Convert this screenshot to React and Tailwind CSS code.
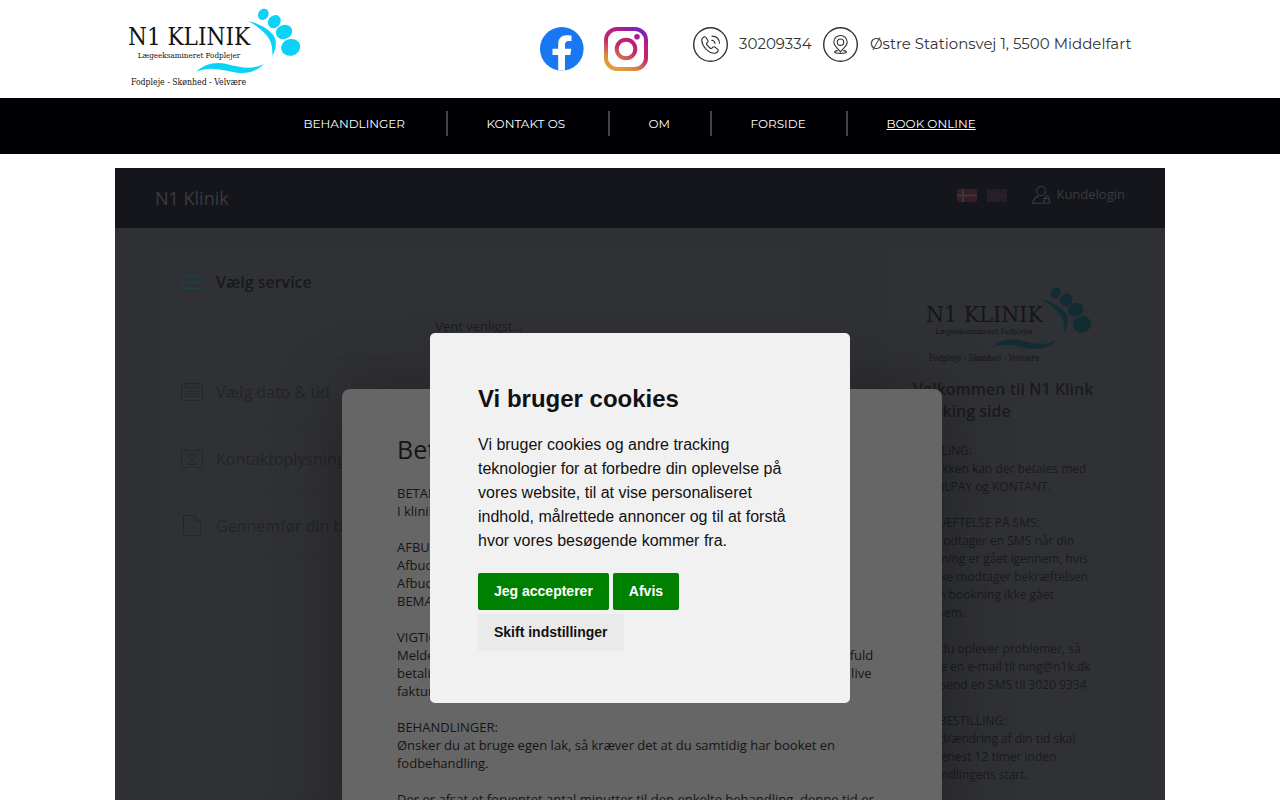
import React from "react";

function Logo({ className, ink, aqua }) {
  return (
    <svg viewBox="15 0 585 294" className={className} role="img" aria-label="N1 Klinik">
      <g fill={ink} fontFamily="'DejaVu Serif Condensed', 'DejaVu Serif', serif">
        <text x="54" y="136" fontSize="72">N1 KLINIK</text>
        <text x="83" y="173" fontSize="24">Lægeeksamineret Fodplejer</text>
        <text x="63" y="255" fontSize="26">Fodpleje - Skønhed - Velvære</text>
      </g>
      <g fill={aqua}>
        <ellipse cx="460" cy="43" rx="15" ry="18" transform="rotate(35 460 43)" />
        <ellipse cx="493" cy="65" rx="18" ry="21" transform="rotate(40 493 65)" />
        <ellipse cx="522" cy="96" rx="25" ry="21" transform="rotate(-20 522 96)" />
        <ellipse cx="542" cy="142" rx="29" ry="25" transform="rotate(-15 542 142)" />
        <path d="M414 62C452 72 482 90 494 112C502 130 496 152 487 167C488 140 484 122 468 104C452 86 434 74 414 62Z" />
        <path d="M258 215C284 192 314 184 350 192C392 202 424 212 462 191C440 215 412 222 380 218C340 212 306 196 258 215Z" />
      </g>
    </svg>
  );
}

function Facebook() {
  return (
    <svg viewBox="0 0 44 44" className="size-11">
      <circle cx="21.8" cy="21.8" r="21.8" fill="#1877f2" />
      <path fill="#fff" d="M18.2 43.5V28H12.5V21.7H18.2V17C18.2 11.3 21.5 8.2 26.6 8.2C28.7 8.2 31.5 8.6 31.5 8.6V14H28.8C26 14 25 15.7 25 17.6V21.7H31.3L30.3 28H25V43.5Z" />
    </svg>
  );
}

function Instagram() {
  return (
    <svg viewBox="0 0 44 44" className="size-11">
      <defs>
        <linearGradient id="insta" x1="0.25" y1="1" x2="0.75" y2="0">
          <stop offset="0" stopColor="#e3a33c" />
          <stop offset="0.2" stopColor="#dc8a44" />
          <stop offset="0.5" stopColor="#c2286b" />
          <stop offset="0.75" stopColor="#bb1d80" />
          <stop offset="1" stopColor="#7024c4" />
        </linearGradient>
      </defs>
      <path
        fill="url(#insta)"
        fillRule="evenodd"
        d="M13 0H31A13 13 0 0 1 44 13V31A13 13 0 0 1 31 44H13A13 13 0 0 1 0 31V13A13 13 0 0 1 13 0ZM13 4A9 9 0 0 0 4 13V31A9 9 0 0 0 13 40H31A9 9 0 0 0 40 31V13A9 9 0 0 0 31 4ZM22 10.7A11.3 11.3 0 1 1 22 33.3A11.3 11.3 0 1 1 22 10.7ZM22 14.7A7.3 7.3 0 1 0 22 29.3A7.3 7.3 0 1 0 22 14.7ZM33 7A2.8 2.8 0 1 1 33 12.6A2.8 2.8 0 1 1 33 7Z"
      />
    </svg>
  );
}

function PhoneBadge() {
  return (
    <svg viewBox="0 0 35 35" className="size-[35px] shrink-0" fill="none" stroke="#333" strokeLinecap="round" strokeLinejoin="round">
      <circle cx="17.5" cy="17.5" r="16.8" strokeWidth="1.4" />
      <path strokeWidth="1.1" d="M11.3 9.8C10 10.3 8.7 11.6 8.8 13.6C9.2 19.6 15.3 25.9 21.5 26.2C23.3 26.3 24.8 25 25.2 23.7C25.4 23 25.1 22.5 24.6 22.1L21.7 20C21.1 19.6 20.4 19.7 19.9 20.2L18.9 21.2C18.4 21.6 17.8 21.6 17.3 21.2C15.9 20.2 14.6 18.8 13.7 17.4C13.4 16.9 13.4 16.4 13.8 16L14.7 15.1C15.2 14.6 15.2 14 14.9 13.5L12.9 10.3C12.5 9.7 11.9 9.6 11.3 9.8Z" />
      <path strokeWidth="1.1" d="M18.7 13.2C20.6 13.4 21.8 14.6 22 16.5M19 9.1C23.4 9.3 26.2 12 26.5 16.3" />
    </svg>
  );
}

function PinBadge() {
  return (
    <svg viewBox="0 0 35 35" className="size-[35px] shrink-0" fill="none" stroke="#333" strokeLinecap="round" strokeLinejoin="round">
      <circle cx="17.5" cy="17.5" r="16.8" strokeWidth="1.4" />
      <path strokeWidth="1.1" d="M17.5 25C16 22.5 10.8 18.8 10.8 15.2A6.7 6.7 0 0 1 24.2 15.2C24.2 18.8 19 22.5 17.5 25Z" />
      <circle cx="17.5" cy="15.2" r="3.2" strokeWidth="1.1" />
      <path strokeWidth="1.1" d="M14.3 23.6C12.5 24 11.4 24.6 11.6 25.2C12 26.8 23 26.8 23.4 25.2C23.6 24.6 22.5 24 20.7 23.6" />
    </svg>
  );
}

function TopBar() {
  return (
    <header className="mx-auto flex h-[98px] w-full max-w-[1050px] shrink-0 items-start font-['Montserrat','Inter',sans-serif] text-[15px] text-[#333]">
      <a href="#forside"><Logo className="h-[98px] w-[195px]" ink="#111" aqua="#0bd3f7" /></a>
      <div className="ml-[230px] flex gap-5 pt-[27px]">
        <a href="#facebook" aria-label="Facebook"><Facebook /></a>
        <a href="#instagram" aria-label="Instagram"><Instagram /></a>
      </div>
      <div className="ml-[45px] flex items-center whitespace-nowrap pt-[27px]">
        <PhoneBadge />
        <a href="tel:30209334" className="ml-[11px] w-[84px]">30209334</a>
        <PinBadge />
        <a href="#kort" className="ml-3">Østre Stationsvej 1, 5500 Middelfart</a>
      </div>
    </header>
  );
}

const navLinks = [
  ["BEHANDLINGER", "w-[103px]"],
  ["KONTAKT OS", "w-[82px]"],
  ["OM", "w-[22px]"],
  ["FORSIDE", "w-[56px]"],
  ["BOOK ONLINE", "w-[90px] underline"],
];

function Nav() {
  return (
    <nav className="flex h-14 shrink-0 justify-center bg-[#000005] pt-[13px] font-['Montserrat','Inter',sans-serif] text-[12px] text-white">
      {navLinks.map(([label, width], i) => (
        <div key={label} className={i ? "flex h-[25px] items-center border-l-2 border-[#444] px-[39px] last:pr-0" : "flex h-[25px] items-center pr-[39px]"}>
          <a href={"#" + label.toLowerCase().replace(" ", "-")} className={"flex whitespace-nowrap " + width}>{label}</a>
        </div>
      ))}
    </nav>
  );
}

function DanishFlag() {
  return (
    <svg viewBox="0 0 20 13" className="h-[13px] w-5">
      <rect width="20" height="13" rx="1.5" fill="#3b1c24" />
      <path d="M6 0V13M0 6.5H20" stroke="#38393d" strokeWidth="2" />
    </svg>
  );
}

function BritishFlag() {
  return (
    <svg viewBox="0 0 20 13" className="h-[13px] w-5">
      <rect width="20" height="13" rx="1.5" fill="#1a1d2d" />
      <path d="M0 0L20 13M20 0L0 13" stroke="#25262c" strokeWidth="2.4" />
      <path d="M0 0L20 13M20 0L0 13" stroke="#2c1a22" strokeWidth="1" />
      <path d="M10 0V13M0 6.5H20" stroke="#25262c" strokeWidth="4" />
      <path d="M10 0V13M0 6.5H20" stroke="#301a23" strokeWidth="2.2" />
    </svg>
  );
}

function LoginIcon() {
  return (
    <svg viewBox="0 0 18 18" className="size-[18px]" fill="none" stroke="#3a3b3f" strokeWidth="1.1">
      <circle cx="9" cy="5" r="4.5" />
      <path d="M11 17.2H.8C1 13.5 3.5 11 7 10.4M12.2 12.5H17.4V17.3H12.2ZM13.3 12.5V11.3A1.5 1.5 0 0 1 16.3 11.3V12.5" />
    </svg>
  );
}

function ListIcon() {
  return (
    <svg viewBox="0 0 24 24" className="size-6 shrink-0" fill="none" stroke="#1c4347" strokeWidth="1">
      <path d="M5 6.5H23M5 12.5H23M5 18.5H23" />
      <circle cx="2.5" cy="6.5" r="1.3" />
      <circle cx="2.5" cy="12.5" r="1.3" />
      <circle cx="2.5" cy="18.5" r="1.3" />
    </svg>
  );
}

function CalendarIcon() {
  return (
    <svg viewBox="0 0 24 24" className="size-6 shrink-0" fill="none" stroke="#25262a" strokeWidth="1">
      <rect x="1.5" y="3.5" width="21" height="17" rx="1" />
      <path d="M1.5 7.5H22.5M5.5 2V6M18.5 2V6" />
      <path d="M7 11.5H20M5 14H20M5 16.5H18" strokeDasharray="2 1" />
    </svg>
  );
}

function ContactIcon() {
  return (
    <svg viewBox="0 0 24 24" className="size-6 shrink-0" fill="none" stroke="#25262a" strokeWidth="1">
      <rect x="1.5" y="3.5" width="21" height="17" rx="1" />
      <path d="M5.5 2V5M18.5 2V5M7.5 17.5C7.5 13.5 16.5 13.5 16.5 17.5Z" />
      <circle cx="12" cy="9.5" r="2.7" />
    </svg>
  );
}

function PageIcon() {
  return (
    <svg viewBox="0 0 24 24" className="size-6 shrink-0" fill="none" stroke="#25262a" strokeWidth="1">
      <path d="M4.5 1.5H14.5L20.5 7.5V20.5A1 1 0 0 1 19.5 21.5H4.5A1 1 0 0 1 3.5 20.5V2.5A1 1 0 0 1 4.5 1.5ZM14.5 1.5V7.5H20.5" />
    </svg>
  );
}

const steps = [
  ["Vælg dato & tid", CalendarIcon],
  ["Kontaktoplysninger", ContactIcon],
  ["Gennemfør din booking", PageIcon],
];

const sidebarText = [
  ["BETALING:", "I klinikken kan der betales med", "MOBILPAY og KONTANT."],
  ["BEKRÆFTELSE PÅ SMS:", "Du modtager en SMS når din", "bookning er gået igennem, hvis", "du ikke modtager bekræftelsen", "er din bookning ikke gået", "igennem."],
  ["Hvis du oplever problemer, så", "sende en e-mail til ning@n1k.dk", "eller send en SMS til 3020 9334."],
  ["VED BESTILLING:", "Afbud/ændring af din tid skal", "ske senest 12 timer inden", "behandlingens start."],
];

const termsText = [
  ["BETALING:", "I klinikken kan der betales med MOBILPAY og KONTANT."],
  ["AFBUD:", "Afbud skal ske senest 12 timer før din tid.", "Afbud kan ske på SMS eller e-mail.", "BEMÆRK at afbud skal bekræftes."],
  ["VIGTIGT:", "Meldes der ikke afbud mindst 12 timer inden den aftalte tid, opkræves der fuld", "betaling for behandlingen. Ved udeblivelser sender klinikken efterfølgende live", "faktura."],
  ["BEHANDLINGER:", "Ønsker du at bruge egen lak, så kræver det at du samtidig har booket en", "fodbehandling."],
  ["Der er afsat et forventet antal minutter til den enkelte behandling, denne tid er"],
];

function Paragraphs({ groups }) {
  return groups.map((lines) => (
    <p key={lines[0]} className="mb-[18px] whitespace-nowrap">
      {lines.map((line) => <span key={line} className="block">{line}</span>)}
    </p>
  ));
}

function Terms() {
  return (
    <section className="absolute inset-y-0 left-[227px] mt-[221px] w-[600px] overflow-hidden rounded-t-lg bg-[#666] px-[55px] pt-[43px] text-[13px] leading-[18px] text-[#151515] shadow-[0_0_70px_rgba(0,0,0,0.3)]">
      <h2 className="mb-[18px] text-[25px] leading-[34px]">Betingelser</h2>
      <Paragraphs groups={termsText} />
    </section>
  );
}

function CookieDialog() {
  const button = "h-[37px] rounded-[2px] px-4 text-[14px] font-bold";
  return (
    <div className="absolute inset-0 flex items-center justify-center">
      <div role="dialog" aria-labelledby="cookie-title" className="w-[420px] rounded-[5px] bg-[#f1f1f1] px-12 pt-12 pb-[52px] font-['Liberation_Sans',Arial,sans-serif] text-[#111]">
        <h1 id="cookie-title" className="mb-4 text-2xl leading-9 font-bold">Vi bruger cookies</h1>
        <p className="mb-5 text-base">Vi bruger cookies og andre tracking teknologier for at forbedre din oplevelse på vores website, til at vise personaliseret indhold, målrettede annoncer og til at forstå hvor vores besøgende kommer fra.</p>
        <div className="flex flex-wrap gap-1">
          <button type="button" className={button + " bg-[#008000] text-white"}>Jeg accepterer</button>
          <button type="button" className={button + " bg-[#008000] text-white"}>Afvis</button>
          <button type="button" className={button + " bg-[#eaeaea] text-[#111]"}>Skift indstillinger</button>
        </div>
      </div>
    </div>
  );
}

export default function App() {
  return (
    <div className="flex h-screen flex-col overflow-hidden bg-white">
      <TopBar />
      <Nav />
      <main className="relative mx-auto mt-3.5 h-[700px] w-full max-w-[1050px] shrink-0 overflow-hidden bg-[#2f3034] font-['Open_Sans',sans-serif]">
        <div className="flex h-[60px] items-center bg-[#15161b] px-10">
          <span className="text-lg text-[#3a3b3f]">N1 Klinik</span>
          <div className="ml-auto mb-1.5 flex items-center">
            <button type="button" aria-label="Dansk"><DanishFlag /></button>
            <button type="button" aria-label="English" className="ml-2.5"><BritishFlag /></button>
            <a href="#login" className="ml-[25px] flex items-center gap-1.5 text-[13px] text-[#3a3b3f]"><LoginIcon />Kundelogin</a>
          </div>
        </div>
        <div className="flex items-start gap-20 px-10 pt-5">
          <div className="flex-1 border border-[#2d2e32] bg-[#303134]">
            <div className="h-[109px] px-6 pt-[21px]">
              <h2 className="flex items-center gap-3 text-base font-semibold text-[#18191c]"><ListIcon />Vælg service</h2>
              <p className="mt-[23px] text-center text-[13px] leading-[18px] text-[#1c1d20]">Vent venligst...</p>
            </div>
            {steps.map(([label, Icon]) => (
              <h2 key={label} className="flex h-[67px] items-center gap-3 border-t border-[#2d2e32] px-6 text-base text-[#232428]"><Icon />{label}</h2>
            ))}
            <div className="h-60 border-t border-[#2d2e32]" />
          </div>
          <aside className="w-[242px] border border-[#2d2e32] bg-[#303134] px-[29px] pt-[30px] text-[12px] leading-[18px] text-[#1a1b1e]">
            <Logo className="h-[94px] w-[188px]" ink="#15161a" aqua="#112c33" />
            <h2 className="mt-[5px] mb-5 text-base leading-[22px] font-semibold whitespace-nowrap">Velkommen til N1 Klink<br />booking side</h2>
            <Paragraphs groups={sidebarText} />
          </aside>
        </div>
        <Terms />
        <CookieDialog />
      </main>
    </div>
  );
}
